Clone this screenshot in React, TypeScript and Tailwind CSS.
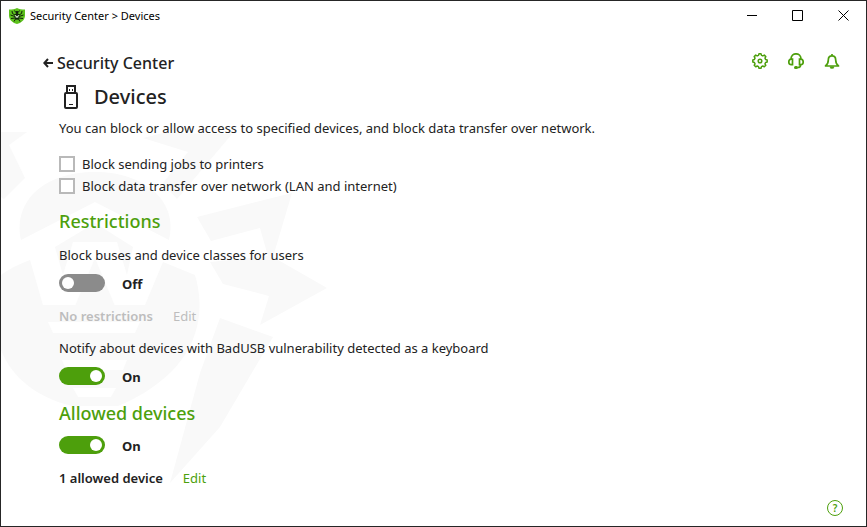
import { useId, useState } from "react";
import type { ReactNode } from "react";

function Shield() {
  return (
    <svg viewBox="0 0 16 16" className="h-4 w-4" aria-hidden>
      <path d="M0 1.500C3 1.500 6 1 8 0c2 1 5 1.500 8 1.500v6C16 12 12 15 8 16 4 15 0 12 0 7.500z" fill="#5cc11c" />
      <ellipse cx="8" cy="8.500" rx="2.300" ry="3.200" fill="#10200a" />
      <circle cx="8" cy="4.500" r="1.400" fill="#10200a" />
      <path
        d="M6 7 3.500 5.500 3 3M10 7l2.500-1.500L13 3M6 8.500 1.500 7M10 8.500 14.500 7M6 10l-4 .5M10 10l4 .5M6.500 11 5 13.500M9.500 11l1.500 2.500M6.500 4 5.500 2.500M9.500 4l1-1.500"
        stroke="#10200a"
        fill="none"
      />
      <path d="m6.500 7 .8 2.500.7-1.500.7 1.500.8-2.500" stroke="#e8ffe0" strokeWidth=".9" fill="none" />
    </svg>
  );
}

// Faint spider behind the settings
function Watermark() {
  return (
    <svg
      viewBox="0 120 340 370"
      className="pointer-events-none absolute -left-px top-[119px] h-[370px] w-[340px]"
      fill="#f9f9f9"
      aria-hidden
    >
      <path d="M1 132h26L9 145l16 33-21 21-3-2z" />
      <path d="m143 138 20-5 69 1-55 65-14-16 25-31z" />
      <path d="M21 240c-8-40 24-68 74-68s84 30 74 68l-74-38z" />
      <path d="m197 217 95-24-19 64 54 31-67 37 9-29-46-12-13-22 58-6-8-28-49 13z" />
      <path d="m220 318 53 19-53 90-50 56 30-110z" />
      <path d="M1 275c8-6 18-11 29-15l13 45h102l18-43 32 13c10 33 4 68-22 95-18 18-38 29-55 36H72C38 398 12 378 1 350z" />
      <path d="m55 247 40-24 38 24-6 28-10-33H73l-10 33zM95 258l20 48H75z" />
      <path d="M48 322h92l-5 11H53zM62 360h65l-4 10H66zM73 388h43l-5 9H78z" fill="#fff" />
    </svg>
  );
}

function ArrowIcon() {
  return (
    <svg viewBox="0 0 10 10" className="h-[10px] w-[10px]" fill="none" stroke="currentColor" strokeWidth="2" aria-hidden>
      <path d="M10 5H1.500M5 1 1.300 5 5 9" />
    </svg>
  );
}

function UsbIcon() {
  return (
    <svg viewBox="0 0 14 24" className="h-6 w-[14px]" aria-hidden>
      <path d="M3 8V1h8v7" fill="none" stroke="currentColor" strokeWidth="2" />
      <rect x="1" y="8" width="12" height="15" rx="1" fill="none" stroke="currentColor" strokeWidth="2" />
      <path d="M5 4h1v2H5zM8 4h1v2H8zM5 19h4v1H5z" fill="currentColor" />
    </svg>
  );
}

function GearIcon() {
  return (
    <svg viewBox="0 0 16 16" className="h-4 w-4" fill="none" stroke="currentColor" strokeWidth="1.500" strokeLinejoin="round" aria-hidden>
      <path d="M6.500 2.400 7 .8h2l.5 1.600 1.300.5 1.500-.8 1.500 1.500-.8 1.500.6 1.400 1.600.5v2l-1.600.5-.6 1.300.8 1.500-1.500 1.500-1.500-.8-1.300.6L9 15.200H7l-.5-1.600-1.300-.6-1.500.8-1.500-1.500.8-1.500-.6-1.300L.8 9V7l1.600-.5.6-1.400-.8-1.500 1.500-1.500 1.500.8z" />
      <circle cx="8" cy="8" r="1.800" />
    </svg>
  );
}

function HeadsetIcon() {
  return (
    <svg viewBox="0 0 16 16" className="h-4 w-4" fill="none" stroke="currentColor" strokeWidth="1.700" aria-hidden>
      <path d="M3 6c0-3 2-5.200 5-5.200S13 3 13 6M4.500 6.200v5.500H3.200C1.500 11.700.8 10.500.8 9s.7-2.800 2.400-2.800zM11.500 6.200v5.500h1.300c1.700 0 2.400-1.200 2.400-2.700s-.7-2.800-2.400-2.800zM12.700 11.700c0 2-1.200 2.800-3.200 2.800" />
      <rect x="6" y="13" width="4" height="3" rx="1.500" fill="currentColor" stroke="none" />
    </svg>
  );
}

function BellIcon() {
  return (
    <svg viewBox="0 0 16 16" className="h-4 w-4" fill="none" stroke="currentColor" strokeWidth="1.700" strokeLinejoin="round" aria-hidden>
      <path d="M8 2.800C5.500 2.800 4.300 4.600 4.300 7c0 3-.9 4.500-2.800 6h13c-1.900-1.500-2.800-3-2.800-6 0-2.400-1.200-4.200-3.700-4.200zM8 1v2" />
      <path d="M6 13.500c0 1.700 4 1.700 4 0z" fill="currentColor" stroke="none" />
      <path d="M6.300 14.200c.7 1 2.700 1 3.400 0" />
    </svg>
  );
}

function WindowButton({ label, d }: { label: string; d: string }) {
  return (
    <button type="button" aria-label={label} className="flex h-[29px] w-[46px] items-center justify-center">
      <svg viewBox="0 0 11 11" className="h-[11px] w-[11px]" fill="none" stroke="#000" aria-hidden>
        <path d={d} />
      </svg>
    </button>
  );
}

function Toggle({ label, initial }: { label: string; initial: boolean }) {
  const [on, setOn] = useState(initial);
  return (
    <div className="flex h-5 items-center">
      <button
        type="button"
        role="switch"
        aria-checked={on}
        aria-label={label}
        onClick={() => setOn(!on)}
        className={`flex h-[18px] w-[46px] items-center rounded-full px-[3px] ${on ? "justify-end bg-[#4d9f0c]" : "justify-start bg-[#8b8b8b]"}`}
      >
        <span className="h-3 w-3 rounded-full bg-white" />
      </button>
      <span className="ml-[17px] pt-px font-bold">{on ? "On" : "Off"}</span>
    </div>
  );
}

function Check({ children }: { children: ReactNode }) {
  const id = useId();
  return (
    <div className="flex h-[22px] items-center gap-[7px]">
      <input
        id={id}
        type="checkbox"
        className="h-4 w-4 appearance-none border-2 border-[#b9b9b9] bg-white checked:bg-[#4d9f0c]"
      />
      <label htmlFor={id}>{children}</label>
    </div>
  );
}

export default function App() {
  return (
    <div className="relative flex min-h-screen flex-col border border-[#262626] bg-white font-['Noto_Sans','Segoe_UI',sans-serif] text-[13px] leading-5 text-[#222]">
      <Watermark />
      <header className="relative flex h-[29px] items-center pl-2 text-[11px] text-black">
        <Shield />
        <span className="ml-[5px] flex-1">Security Center &gt; Devices</span>
        <WindowButton label="Minimize" d="M1 5.500h10" />
        <WindowButton label="Maximize" d="M.5.500h10v10H.500z" />
        <WindowButton label="Close" d="m.5.500 10 10m0-10-10 10" />
      </header>

      <nav className="relative mt-[21px] flex h-6 items-center pl-[42px] pr-[26px]">
        <a href="#security-center" className="flex flex-1 items-center gap-1 text-[16px] leading-6 font-medium">
          <ArrowIcon />
          Security Center
        </a>
        <div className="flex gap-5 self-start pt-[2px] text-[#4d9f0c]">
          <button type="button" aria-label="Settings"><GearIcon /></button>
          <button type="button" aria-label="Support"><HeadsetIcon /></button>
          <button type="button" aria-label="Notifications"><BellIcon /></button>
        </div>
      </nav>

      <main className="relative flex-1 px-[58px]">
        <h1 className="mt-2 flex h-7 items-center gap-4 pl-[5px] text-[20px] leading-7 font-medium">
          <UsbIcon />
          Devices
        </h1>
        <p className="mt-[7px]">
          You can block or allow access to specified devices, and block data transfer over network.
        </p>

        <div className="mt-[15px]">
          <Check>Block sending jobs to printers</Check>
          <Check>Block data transfer over network (LAN and internet)</Check>
        </div>

        <h2 className="mt-3 text-[18px] leading-6 font-medium text-[#4d9f0c]">Restrictions</h2>
        <p className="mt-3">Block buses and device classes for users</p>
        <div className="mt-2">
          <Toggle label="Block buses and device classes for users" initial={false} />
        </div>
        <p className="mt-[13px] flex gap-5 text-[#bdbdbd]">
          <span className="font-semibold">No restrictions</span>
          <button type="button" disabled>Edit</button>
        </p>
        <p className="mt-3">Notify about devices with BadUSB vulnerability detected as a keyboard</p>
        <div className="mt-2">
          <Toggle label="Notify about devices with BadUSB vulnerability" initial />
        </div>

        <h2 className="mt-[15px] text-[18px] leading-6 font-medium text-[#4d9f0c]">Allowed devices</h2>
        <div className="mt-[10px]">
          <Toggle label="Allowed devices" initial />
        </div>
        <p className="mt-[13px] flex gap-5">
          <span className="font-semibold">1 allowed device</span>
          <a href="#allowed" className="text-[#4d9f0c]">Edit</a>
        </p>
      </main>

      <footer className="relative flex justify-end pr-[23px] pb-[10px]">
        <button
          type="button"
          aria-label="Help"
          className="flex h-4 w-4 items-center justify-center rounded-full border border-[#4d9f0c] text-[10px] leading-3 font-semibold text-[#4d9f0c]"
        >
          ?
        </button>
      </footer>
    </div>
  );
}
